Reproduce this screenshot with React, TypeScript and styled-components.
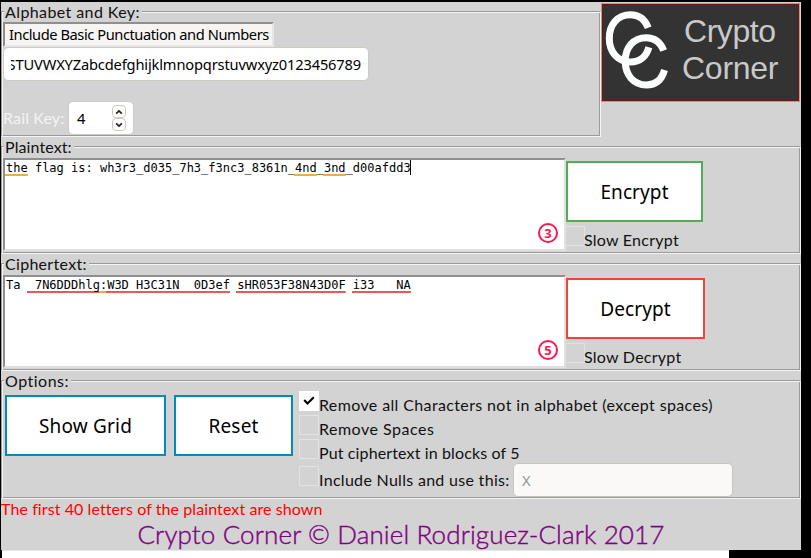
import React from 'react';
import styled, { createGlobalStyle } from 'styled-components';

const GlobalStyle = createGlobalStyle`
  *, *::before, *::after { box-sizing: border-box; }
  body {
    margin: 0;
    background: #000;
    color: #111;
    font: 16px/20px Lato, "Open Sans", sans-serif;
    overflow: hidden;
  }
`;

const Page = styled.main`
  width: 811px;
  height: 558px;
  padding: 2px 10px 0 1px;
  background: #000;
  overflow: hidden;
`;

const Form = styled.div`
  width: 800px;
  height: 548px;
  background: #d3d3d3;
`;

const TopRow = styled.div`
  display: flex;
  height: 135px;
`;

const Panel = styled.section<{ $width?: number; $height: number }>`
  width: ${(p) => p.$width ?? 800}px;
  height: ${(p) => p.$height}px;
  margin-top: 9px;
  padding: 0 1px;
  border: 1px solid;
  border-color: #9a9a9a #f4f4f4 #f4f4f4 #9a9a9a;
  box-shadow: inset 1px 1px #f4f4f4, inset -1px -1px #9a9a9a;
`;

const Legend = styled.h2<{ $spacing: number }>`
  width: max-content;
  height: 20px;
  margin: -10px 0 0 1px;
  padding: 0 2px 0 1px;
  background: #d3d3d3;
  font-size: 16px;
  font-weight: 400;
  letter-spacing: ${(p) => p.$spacing}px;
`;

const Text = styled.span<{ $spacing?: number }>`
  white-space: pre;
  letter-spacing: ${(p) => p.$spacing ?? 0}px;
`;

const AlphabetButton = styled.button`
  display: block;
  width: 271px;
  height: 25px;
  padding: 0 0 0 4px;
  border: 2px solid;
  border-color: #8f8f8f #e6e6e6 #e6e6e6 #8f8f8f;
  background: #f6f5f4;
  color: #000;
  font: 14.667px/21px "Noto Sans", sans-serif;
  letter-spacing: -0.44px;
  text-align: left;
  white-space: nowrap;
`;

const Field = styled.div<{ $width: number; $disabled?: boolean }>`
  display: flex;
  width: ${(p) => p.$width}px;
  height: 34px;
  padding: 0 7px 0 8px;
  border: 1px solid ${(p) => (p.$disabled ? '#c9c4bd' : '#d0cac4')};
  border-radius: 5px;
  background: ${(p) => (p.$disabled ? '#faf9f8' : '#fff')};
  color: ${(p) => (p.$disabled ? '#929595' : '#000')};
  font: 14.667px/32px "Noto Sans", sans-serif;
`;

const AlphabetValue = styled.div`
  display: flex;
  flex: 1;
  justify-content: flex-end;
  margin-left: -1px;
  overflow: hidden;
  letter-spacing: -0.16px;
`;

const KeyRow = styled.div`
  display: flex;
  align-items: center;
  margin-top: 20px;
`;

const KeyLabel = styled.label`
  width: 65px;
  color: #f3f3f3;
  letter-spacing: 0.15px;
`;

const Stepper = styled.div`
  display: flex;
  flex-direction: column;
  margin: 3px 0 0 auto;
`;

const Step = styled.span`
  display: flex;
  align-items: center;
  justify-content: center;
  width: 14px;
  height: 13px;
  border: 1px solid #cdc7c2;
  border-radius: 4px;
`;

const LogoBox = styled.div`
  width: 199px;
  height: 99px;
  margin-top: 1px;
  border: 1px solid #d98a8a;
  background: #333;
  box-shadow: inset 0 0 0 1px #6b1515;
`;

const CipherRow = styled.div`
  display: flex;
  margin-top: 1px;
`;

const TextBox = styled.div`
  position: relative;
  width: 563px;
  height: 93px;
  padding: 0 1px;
  border: 2px solid;
  border-color: #8f8f8f #e0e0e0 #e0e0e0 #8f8f8f;
  background: #fff;
  color: #000;
  font: 12px/16px "DejaVu Sans Mono", monospace;
  white-space: pre;
`;

const Mark = styled.span<{ $color: string }>`
  margin-left: -1px;
  padding: 0 0 1px 1px;
  background: linear-gradient(${(p) => p.$color}, ${(p) => p.$color}) bottom / 100% 2px no-repeat;
`;

const Caret = styled.span`
  display: inline-block;
  width: 1px;
  height: 15px;
  margin-left: -1px;
  background: #000;
  vertical-align: top;
`;

const Badge = styled.span`
  position: absolute;
  right: 6px;
  bottom: 6px;
  display: flex;
  align-items: center;
  justify-content: center;
  width: 20px;
  height: 20px;
  border: 2px solid #f51b50;
  border-radius: 50%;
  color: #f51b50;
  font: 700 13px/16px "Open Sans", sans-serif;
`;

const Side = styled.div`
  padding-top: 3px;
`;

const ActionButton = styled.button<{ $color: string; $width: number; $spacing?: number }>`
  display: block;
  width: ${(p) => p.$width}px;
  height: 61px;
  padding: 2px 0 0;
  border: 2px solid ${(p) => p.$color};
  background: #fff;
  color: #000;
  font: 19px/55px "Noto Sans", sans-serif;
  letter-spacing: ${(p) => p.$spacing ?? 0.1}px;
`;

const CheckLabel = styled.label`
  display: flex;
  height: 24px;
`;

const SlowLabel = styled(CheckLabel)`
  position: relative;
  margin: 4px 0 0 -1px;
`;

const CheckBox = styled.span<{ $checked?: boolean }>`
  display: flex;
  align-items: center;
  justify-content: center;
  flex: none;
  width: 20px;
  height: 20px;
  border: 1px solid ${(p) => (p.$checked ? '#fff' : '#e2e2e2')};
  background: ${(p) => (p.$checked ? '#fff' : 'transparent')};
`;

const CheckText = styled(Text)`
  margin-top: 4px;
`;

const SlowText = styled(CheckText)`
  margin-left: -1px;
`;

const OptionsRow = styled.div`
  display: flex;
  padding-left: 2px;
`;

const Buttons = styled.div`
  display: flex;
  gap: 8px;
  padding-top: 4px;
  margin-right: 6px;
`;

const NullsRow = styled.div`
  display: flex;
  width: 434px;
  justify-content: space-between;
`;

const NullsLabel = styled(CheckLabel)`
  margin-top: 3px;
`;

const Status = styled.p`
  margin: 0;
  height: 20px;
  color: #f00;
  letter-spacing: 0.09px;
`;

const Credit = styled.p`
  height: 29px;
  margin: 0;
  color: purple;
  font-size: 26px;
  font-weight: 300;
  line-height: 30px;
  letter-spacing: 0.12px;
  text-align: center;
  -webkit-text-stroke: 0.4px purple;
`;

const BottomStrip = styled.div`
  width: 727px;
  height: 8px;
  margin-left: 1px;
  border-top: 1px solid #e8e8e8;
  background: #fff;
`;

const ORANGE = '#f0ad45';
const RED = '#e85a5a';

function Chevron({ up }: { up?: boolean }) {
  return (
    <svg width="8" height="6" viewBox="0 0 8 6" fill="none" stroke="#222" strokeWidth="1.7">
      <path d={up ? 'M1.2 4.6 4 2l2.8 2.6' : 'M1.2 1.4 4 4l2.8-2.6'} />
    </svg>
  );
}

function Logo() {
  return (
    <LogoBox>
      <svg width="197" height="97" viewBox="602 4 197 97" role="img" aria-label="Crypto Corner">
        <g fill="none" stroke="#fafdfc" strokeWidth="7">
          <path d="M648.2 27.8C645 19.5 638.5 14.8 630.5 14.8C617.5 14.8 609.3 24.7 609.3 38.2C609.3 52 617.8 62 630.5 62C640 62 646.4 56.3 648.9 47.2" />
          <path d="M663.7 50.5C660.5 42.3 654.3 37.7 646.3 37.7C633.3 37.7 625.2 47.6 625.2 61.1C625.2 75 633.5 84.9 646.3 84.9C655.8 84.9 662 79.2 664.5 70" />
        </g>
        <g fill="#c9c9c9" fontFamily="Liberation Sans, Arial, sans-serif">
          <text x="684" y="42" fontSize="32" textLength="92">Crypto</text>
          <text x="682" y="79" fontSize="32" textLength="96.5">Corner</text>
        </g>
      </svg>
    </LogoBox>
  );
}

function Check({ checked }: { checked?: boolean }) {
  return (
    <CheckBox $checked={checked}>
      {checked && (
        <svg width="12" height="10" viewBox="0 0 12 10" fill="none" stroke="#000" strokeWidth="2.1">
          <path d="M1.2 4 4.5 7.4 10.8 1.2" />
        </svg>
      )}
    </CheckBox>
  );
}

export default function App() {
  return (
    <>
      <GlobalStyle />
      <Page>
        <Form>
          <TopRow>
            <Panel $width={600} $height={126}>
              <Legend $spacing={0.4}>Alphabet and Key:</Legend>
              <AlphabetButton>Include Basic Punctuation and Numbers</AlphabetButton>
              <Field $width={366}>
                <AlphabetValue>STUVWXYZabcdefghijklmnopqrstuvwxyz0123456789</AlphabetValue>
              </Field>
              <KeyRow>
                <KeyLabel>Rail Key:</KeyLabel>
                <Field $width={66}>
                  <Text>4</Text>
                  <Stepper>
                    <Step><Chevron up /></Step>
                    <Step><Chevron /></Step>
                  </Stepper>
                </Field>
              </KeyRow>
            </Panel>
            <Logo />
          </TopRow>

          <Panel $height={108}>
            <Legend $spacing={0.1}>Plaintext:</Legend>
            <CipherRow>
              <TextBox>
                <Mark $color={ORANGE}>the</Mark> flag is: wh3r3_d035_7h3_f3nc3_8361n_
                <Mark $color={ORANGE}>4nd</Mark>_<Mark $color={ORANGE}>3nd</Mark>_d00afdd3<Caret />
                <Badge>3</Badge>
              </TextBox>
              <Side>
                <ActionButton $color="#4caf50" $width={137}>Encrypt</ActionButton>
                <SlowLabel>
                  <Check />
                  <SlowText $spacing={0.25}>Slow Encrypt</SlowText>
                </SlowLabel>
              </Side>
            </CipherRow>
          </Panel>

          <Panel $height={108}>
            <Legend $spacing={0.3}>Ciphertext:</Legend>
            <CipherRow>
              <TextBox>
                {'Ta '}
                <Mark $color={RED}>{' 7N6DDDhlg'}</Mark>
                <Mark $color={ORANGE}>:</Mark>
                <Mark $color={RED}>{'W3D H3C31N  0D3ef'}</Mark>{' '}
                <Mark $color={RED}>sHR053F38N43D0F</Mark>{' '}
                <Mark $color={RED}>{'i33   NA'}</Mark>
                <Badge>5</Badge>
              </TextBox>
              <Side>
                <ActionButton $color="#f44336" $width={139}>Decrypt</ActionButton>
                <SlowLabel>
                  <Check />
                  <SlowText $spacing={0.25}>Slow Decrypt</SlowText>
                </SlowLabel>
              </Side>
            </CipherRow>
          </Panel>

          <Panel $height={119}>
            <Legend $spacing={0.5}>Options:</Legend>
            <OptionsRow>
              <Buttons>
                <ActionButton $color="#008cba" $width={161} $spacing={0.2}>Show Grid</ActionButton>
                <ActionButton $color="#008cba" $width={119} $spacing={0.2}>Reset</ActionButton>
              </Buttons>
              <div>
                <CheckLabel>
                  <Check checked />
                  <CheckText $spacing={0.37}>Remove all Characters not in alphabet (except spaces)</CheckText>
                </CheckLabel>
                <CheckLabel>
                  <Check />
                  <CheckText $spacing={0.5}>Remove Spaces</CheckText>
                </CheckLabel>
                <CheckLabel>
                  <Check />
                  <CheckText $spacing={0.13}>Put ciphertext in blocks of 5</CheckText>
                </CheckLabel>
                <NullsRow>
                  <NullsLabel>
                    <Check />
                    <CheckText $spacing={0.3}>Include Nulls and use this:</CheckText>
                  </NullsLabel>
                  <Field $width={220} $disabled>X</Field>
                </NullsRow>
              </div>
            </OptionsRow>
          </Panel>

          <Status>The first 40 letters of the plaintext are shown</Status>
          <Credit>Crypto Corner © Daniel Rodriguez-Clark 2017</Credit>
        </Form>
        <BottomStrip />
      </Page>
    </>
  );
}
